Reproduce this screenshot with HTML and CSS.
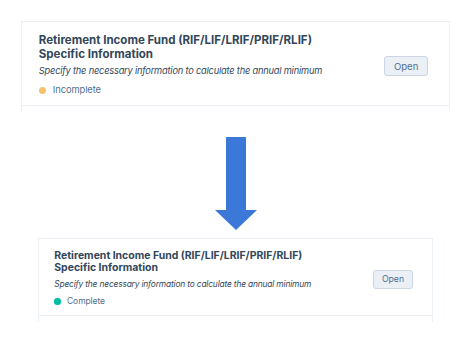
FILE: index.html
```html
<!DOCTYPE html>
<html lang="en">
<head>
    <meta charset="UTF-8">
    <meta name="viewport" content="width=device-width, initial-scale=1.0">
    <title>Retirement Income Fund</title>
    <link rel="stylesheet" href="styles.css">
</head>
<body>
    <div class="page">
        <div class="card">
            <div class="card-body">
                <div class="info">
                    <h2 class="title">Retirement Income Fund (RIF/LIF/LRIF/PRIF/RLIF)<br>Specific Information</h2>
                    <p class="desc">Specify the necessary information to calculate the annual minimum</p>
                    <p class="status"><span class="dot dot-incomplete"></span>Incomplete</p>
                </div>
                <button class="open-button">Open</button>
            </div>
        </div>

        <svg class="arrow" width="42" height="93" viewBox="0 0 42 93">
            <polygon points="11,0 31,0 31,73 42,73 21,93 0,73 11,73" fill="#3c78d8"/>
        </svg>

        <div class="card card-small">
            <div class="card-body">
                <div class="info">
                    <h2 class="title">Retirement Income Fund (RIF/LIF/LRIF/PRIF/RLIF)<br>Specific Information</h2>
                    <p class="desc">Specify the necessary information to calculate the annual minimum</p>
                    <p class="status"><span class="dot dot-complete"></span>Complete</p>
                </div>
                <button class="open-button">Open</button>
            </div>
        </div>
    </div>
</body>
</html>
```

FILE: styles.css
```css
body {
    margin: 0;
    background: white;
    font-family: Inter, "Liberation Sans", sans-serif;
    color: #33475b;
}
.page {
    width: 429px;
    margin-left: 21px;
    padding-top: 21px;
    display: flex;
    flex-direction: column;
    align-items: center;
}
.card {
    width: 100%;
    box-sizing: border-box;
    font-size: 12px;
    border: 1px solid #eaf0f6;
    border-bottom: none;
    padding-bottom: 0.5em;
}
.card-small {
    width: 395px;
    font-size: 10.9px;
}
.card-body {
    display: flex;
    align-items: center;
    justify-content: space-between;
    padding: 0.95em 1.75em 0.75em 1.4em;
    border-bottom: 1px solid #eaf0f6;
}
.title {
    margin: 0;
    font-size: 0.96em;
    line-height: 1.22em;
    font-weight: 700;
}
.desc {
    margin: 0.4em 0 0;
    font-size: 0.77em;
    font-style: italic;
    line-height: 1.3em;
    letter-spacing: -0.02em;
}
.status {
    margin: 0.75em 0 0;
    font-size: 0.78em;
    line-height: 1.3em;
    letter-spacing: -0.01em;
    color: #516f90;
    display: flex;
    align-items: center;
}
.dot {
    width: 0.75em;
    height: 0.75em;
    border-radius: 50%;
    margin-right: 0.75em;
}
.dot-incomplete {
    background: #f5c26b;
}
.dot-complete {
    background: #00bda5;
}
.open-button {
    font-family: inherit;
    font-size: 0.8em;
    line-height: 1.2em;
    color: #516f90;
    background: #eaf0f6;
    border: 1px solid #cbd6e2;
    border-radius: 3px;
    padding: 0.35em 0.9em;
    margin-top: 0.3em;
}
.arrow {
    display: block;
    margin: 25px 0 8px;
}
```
